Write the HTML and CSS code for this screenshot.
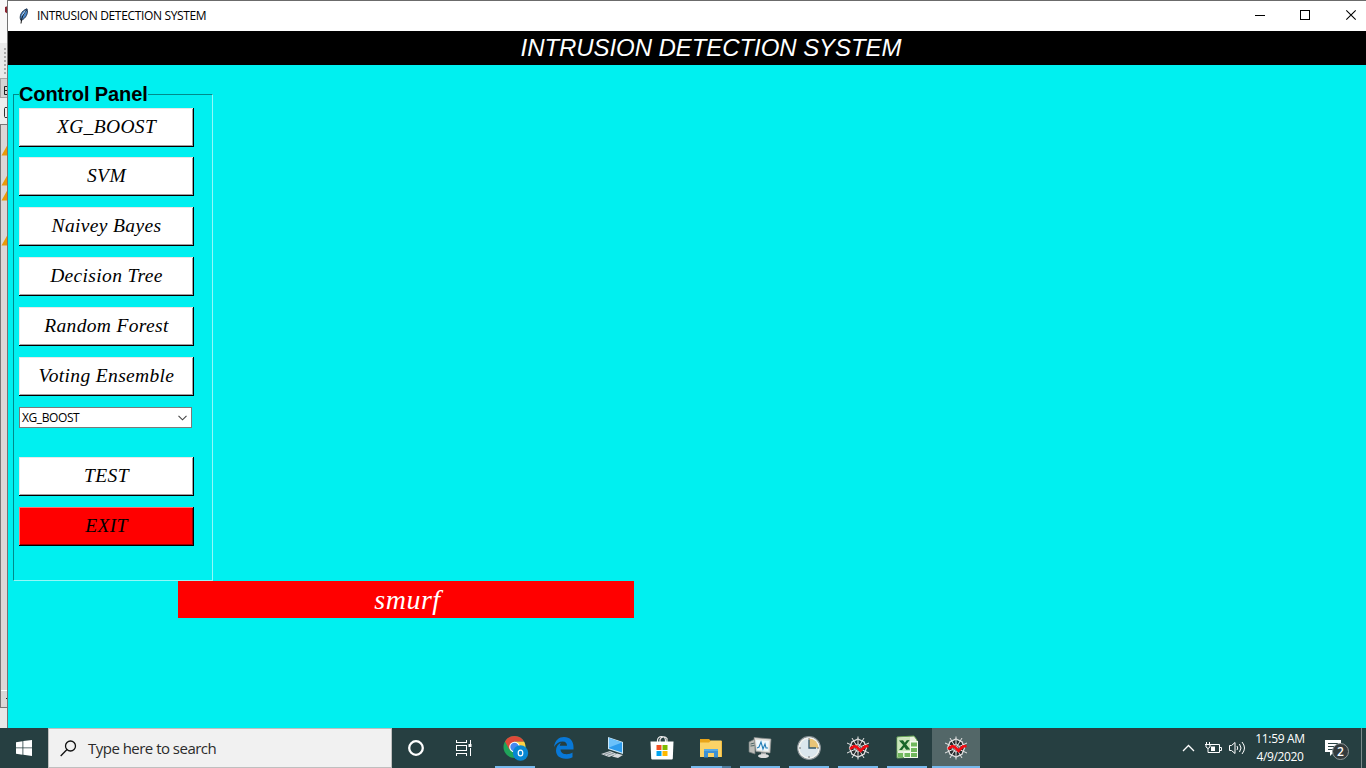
FILE: index.html
```html
<!DOCTYPE html>
<html lang="en">
<head>
<meta charset="utf-8">
<title>INTRUSION DETECTION SYSTEM</title>
<link rel="stylesheet" href="styles.css">
</head>
<body>
<div class="desktop">
  <div class="workspace">
    <div class="behind">
      <svg width="8" height="728" viewBox="0 0 8 728">
        <rect width="8" height="43" fill="#f8f8f8"/>
        <path d="M5 7l3-1v8l-3-2z" fill="#8a2430"/>
        <rect y="43" width="8" height="35" fill="#e9e9e9"/>
        <path d="M5 48v26" stroke="#aaa" stroke-width="2" stroke-dasharray="2 2"/>
        <rect y="78" width="8" height="20" fill="#d4d4d4"/>
        <path d="M0 78.500h8M0 97.500h8M.5 78v20" stroke="#a5a5a5"/>
        <path d="M8 86.500H4.500v8H8M4.500 90.500H8" fill="none" stroke="#222"/>
        <rect y="98" width="8" height="26" fill="#eee"/>
        <path d="M8 107.500H5l-.5 1v8l.5 1h3" fill="none" stroke="#333"/>
        <rect y="124" width="8" height="584" fill="#dbd7d7"/>
        <path d="M0 124.500h8M.5 124v584M0 707.500h8" stroke="#777"/>
        <path d="M1 690.500h7" stroke="#fff"/>
        <path d="M6 698.500h2" stroke="#222"/>
        <path d="M1.500 155.500L8 144v11.500zM1.500 185.500L8 174v11.500zM1.500 200.500L8 189v11.500zM1.500 245.500L8 234v11.500z" fill="#e99a08"/>
        <rect y="708" width="8" height="20" fill="#e8e8e8"/>
        <path d="M7.500 0v728" stroke="#737373"/>
      </svg>
    </div>
    <main class="window">
      <header class="titlebar">
        <svg class="feather" width="10" height="16" viewBox="0 0 10 16"><path d="M2 12.500C-.3 8.500 2.500 2.500 8 .8 9.500 5 7 10.500 2 12.500z" fill="#4a86c8" stroke="#14263d" stroke-width=".9"/><path d="M2 15.500C2.400 10 4 6 7.500 2" fill="none" stroke="#111" stroke-width="1"/><path d="M3 7.500L6.300 2.800" stroke="#b8d8f5"/></svg>
        <span class="window-name">INTRUSION DETECTION SYSTEM</span>
        <svg class="window-controls" width="112" height="30" viewBox="0 0 112 30" fill="none" stroke="#000"><path d="M1 14.500h10M46.500 9.500h9v9h-9z" shape-rendering="crispEdges"/><path d="M92.300 9.300l9.400 9.400M101.700 9.300l-9.400 9.400" stroke-width="1.100"/></svg>
      </header>
      <h1 class="banner"><span>INTRUSION DETECTION SYSTEM</span></h1>
      <div class="content">
        <fieldset class="panel">
          <legend>Control Panel</legend>
          <button class="btn first">XG_BOOST</button>
          <button class="btn">SVM</button>
          <button class="btn">Naivey Bayes</button>
          <button class="btn">Decision Tree</button>
          <button class="btn">Random Forest</button>
          <button class="btn">Voting Ensemble</button>
          <div class="combo"><span>XG_BOOST</span><svg width="9" height="6" viewBox="0 0 9 6"><path d="M.5 .8l4 4 4-4" fill="none" stroke="#444" stroke-width="1.100"/></svg></div>
          <button class="btn">TEST</button>
          <button class="btn exit">EXIT</button>
        </fieldset>
        <div class="result">smurf</div>
      </div>
    </main>
  </div>
  <footer class="taskbar">
    <div class="start"><svg width="16" height="16" viewBox="0 0 16 16" fill="#fff"><path d="M0 2.200L6.500 1.200v6.300H0zM7.300 1.100L16 0v7.500H7.300zM0 8.300h6.500v6.400L0 13.800zM7.300 8.300H16V16l-8.700-1.200z"/></svg></div>
    <div class="search"><svg width="17" height="17" viewBox="0 0 17 17" fill="none" stroke="#111" stroke-width="1.300"><circle cx="10.500" cy="6" r="5"/><path d="M7 9.500L.7 16"/></svg><span>Type here to search</span></div>
    <nav class="apps">
      <div class="app cortana"><svg width="24" height="24" viewBox="0 0 24 24"><circle cx="12" cy="12" r="6.800" fill="none" stroke="#fff" stroke-width="2.300"/></svg></div>
      <div class="app view"><svg width="24" height="24" viewBox="0 0 24 24" fill="none" stroke="#fff"><path d="M4 4v2.500h10V4M4 20v-2.500h10V20M4 9.500h10v5H4zM18 4v4M18 12v8" shape-rendering="crispEdges"/><path d="M16.500 8h3v3h-3z" fill="#fff" stroke="none"/></svg></div>
      <div class="app open"><svg width="28" height="28" viewBox="0 0 28 28"><circle cx="13.500" cy="13" r="11" fill="#20a45a"/><path d="M4 7.500A11 11 0 0 1 23.200 7.800H13.500l-5 8z" fill="#df4939"/><path d="M13.500 7.800h9.700A11 11 0 0 1 14 24l5-8z" fill="#fdd044"/><circle cx="13.500" cy="13" r="5.300" fill="#fff"/><circle cx="13.500" cy="13" r="4.200" fill="#4688ef"/><circle cx="19.500" cy="19" r="7.700" fill="#0787d2"/><ellipse cx="19.500" cy="19" rx="2.300" ry="2.900" fill="none" stroke="#fff" stroke-width="1.200"/></svg></div>
      <div class="app"><svg width="24" height="24" viewBox="0 0 24 24"><path d="M2 11C3 4 7 1 12 1c6 0 9.500 4 9.500 10v2.500H8.500c.2 3 2.500 4.700 6 4.700 2.500 0 4.500-.7 6-1.700v4.700c-2 1.200-4.400 1.600-7 1.600-6 0-9.500-3.400-9.500-8.200 0-3.800 2-6.400 5-7.800-.6.800-1 1.700-1.200 3H15c0-2.700-1.300-4.300-4.200-4.300-3.800 0-6.800 2-8.800 5.500z" fill="#0878d7"/></svg></div>
      <div class="app"><svg width="26" height="24" viewBox="0 0 26 24"><path d="M8 1l15 5v12L8 13z" fill="#cce9fa"/><path d="M9 2.300l13 4.300v9.900L9 12.200z" fill="#2d9ced"/><path d="M9 2.300l13 4.300-13 5z" fill="#6ac1fa"/><path d="M1 18l9-3 7 3-8 3z" fill="#ced4d7"/><path d="M4 18.500l7-2.500M7 19.500l7-2.500" stroke="#89949a"/><path d="M12 20.500l5-3 6 1.500-5 3z" fill="#d6dadc"/></svg></div>
      <div class="app"><svg width="24" height="26" viewBox="0 0 24 26"><path d="M7.500 7V5.500a4 4 0 0 1 8 0V7M10 7V4.500a4 4 0 0 1 7-1V7" fill="none" stroke="#eee" stroke-width="1.200"/><path d="M.5 6.500h23l-.7 17a1.200 1.200 0 0 1-1 1H2.200a1.200 1.200 0 0 1-1-1z" fill="#fff"/><path d="M6.500 10h5v5h-5z" fill="#f25022"/><path d="M12.500 10h5v5h-5z" fill="#7fba00"/><path d="M6.500 16h5v5h-5z" fill="#00a4ef"/><path d="M12.500 16h5v5h-5z" fill="#ffb900"/></svg></div>
      <div class="app open multi"><svg width="24" height="24" viewBox="0 0 24 24"><path d="M1 3h9l2 2h11v16H1z" fill="#e9a51a"/><path d="M1 6.500h9l2-2h10.500v16.500H1z" fill="#fbd367"/><path d="M5 13h14v8.500h-4V17H9v4.500H5z" fill="#3d91d3"/><path d="M5 13h14v2H5z" fill="#58abe5"/></svg></div>
      <div class="app open"><svg width="26" height="24" viewBox="0 0 26 24"><path d="M2 6l6-3v15l-6-2z" fill="#bcbdb9" stroke="#71787a" stroke-width=".7"/><path d="M3.500 8l4-1M3.500 10l4-.5" stroke="#4c6666"/><path d="M7 1.500l17 1.500-1 14-14-1.500z" fill="#e0dfda" stroke="#858a8a" stroke-width=".7"/><path d="M9 4l13 1-.8 10-11.200-1z" fill="#eef8fd"/><path d="M10 12l2-1 2-5 2 7 2-5 1 4h2" fill="none" stroke="#237eb7" stroke-width="1.100"/><path d="M14 16.500h5v3.500h-5z" fill="#aaa"/><ellipse cx="16.500" cy="20" rx="5.500" ry="2" fill="#ddd"/></svg></div>
      <div class="app open"><svg width="26" height="26" viewBox="0 0 26 26"><circle cx="13" cy="13" r="11.300" fill="#dbe7ed" stroke="#8c9498" stroke-width="1.200"/><circle cx="13" cy="13" r="10" fill="none" stroke="#f5f5ef" stroke-width="1.200"/><path d="M13 13V3.500a9.500 9.500 0 0 1 9.500 9.500z" fill="#e8c477"/><path d="M13 5v8h7" fill="none" stroke="#31586f" stroke-width="1.300"/><path d="M13 3v2M13 21v2M3 13h2M21 13h2" stroke="#777"/></svg></div>
      <div class="app open"><svg width="24" height="24" viewBox="0 0 24 24"><use href="#web"/></svg></div>
      <div class="app open"><svg width="26" height="26" viewBox="0 0 26 26"><path d="M3 2l17-1 3 4v17l-20 1z" fill="#e7f1df" stroke="#65a554"/><path d="M10 6h14v17H10z" fill="#f4faee"/><path d="M17 7.500h6v4h-6zM17 13h6v4h-6zM4 18h5v4H4zM10.500 18h5.500v4h-5.500zM17 18h6v4h-6z" fill="#70b85d"/><path d="M3.500 3l12.500-1v14L3.500 16z" fill="#c9e5ba"/><path d="M5 5.500l4-.2 1.800 2.500 1.900-2.600 3-.1-3.500 4.500 4 4.900-4 .2-2-2.600-2.100 2.800-3 .1 4-5z" fill="#17652a"/></svg></div>
      <div class="app open active"><svg width="24" height="24" viewBox="0 0 24 24"><defs><g id="web"><path d="M12 3l6 2.800L20.500 12 18 18.200 12 21l-6-2.800L3.500 12 6 5.800z" fill="#252b2d" stroke="#ddd" stroke-width="1.300"/><path d="M12 .5v23M1 7l22 10M23 7L1 17M6 2l12 20M18 2L6 22" stroke="#e4e4e4"/><path d="M12 8l2.800 1.200L16 12l-1.200 2.800L12 16l-2.800-1.200L8 12l1.200-2.800z" fill="none" stroke="#ccc"/><path d="M4 13l4-2.700 2.500.5 4 4 4.500-4.300 3.500-.5" fill="none" stroke="#f20b12" stroke-width="2.700"/></g></defs><use href="#web"/></svg></div>
    </nav>
    <div class="tray">
      <svg width="66" height="20" viewBox="0 0 66 20" fill="none" stroke="#fff"><path d="M1 13l5.500-5.500L12 13" stroke-width="1.300"/><path d="M28.500 6.500h9v8H26M38 9.500h1.500v3H38"/><path d="M29 8.500h4v4.500h-4z" fill="#fff" stroke="none"/><path d="M24.500 4v2M27.500 4v2M23 6.500h6M24 7v2l2 1.500 2-1.500V7M26 10v4.500"/><path d="M47.500 7.500h2l3.500-3v11l-3.500-3h-2z"/><path d="M55 8q1.500 2 0 4M57.500 6q3 4 0 8M60 4q5 6 0 12"/></svg>
      <div class="clock"><span class="time">11:59 AM</span><span class="date">4/9/2020</span></div>
      <div class="notice"><svg width="18" height="17" viewBox="0 0 18 17"><path d="M0 0h16v12H9l-4 4v-4H0z" fill="#fff"/><path d="M3 3.500h10M3 6.500h10M3 9.500h5" stroke="#294344"/></svg><span class="badge">2</span></div>
      <i class="peek"></i>
    </div>
  </footer>
</div>
</body>
</html>
```
FILE: styles.css
```css
* { box-sizing: border-box; }
body { margin: 0; width: 1366px; height: 768px; overflow: hidden; font-family: "Open Sans", "Noto Sans", sans-serif; }
svg { display: block; flex: none; }
.desktop { display: grid; grid-template-rows: 728px 40px; }
.workspace { display: grid; grid-template-columns: 8px 1fr; }
.window { background: #00f0f0; border-top: 1px solid #6b6b6b; }
.titlebar { height: 30px; background: #fff; display: flex; align-items: center; padding-left: 11px; }
.feather { margin-right: 8px; margin-top: -1px; }
.window-name { font-size: 12px; letter-spacing: -0.34px; margin-top: -1px; color: #000; white-space: nowrap; }
.window-controls { margin-left: auto; }
.banner { margin: 0; height: 34px; background: #000; color: #fff; font: italic 24px/34px "Liberation Sans", Arial, sans-serif; letter-spacing: -0.07px; text-align: center; padding-left: 48px; white-space: nowrap; }
.content { padding: 19px 0 0 5px; }
.panel { width: 200px; height: 497px; margin: 0; padding: 0 0 0 5px; border: 1px solid; border-color: #008b8b #91f8f8 #91f8f8 #008b8b; }
.panel legend { padding: 0; font: bold 20px/20px "Liberation Sans", Arial, sans-serif; letter-spacing: -0.1px; color: #000; height: 20px; }
.btn { display: block; width: 175px; height: 39px; margin: 0 0 11px; padding: 0 0 2px; background: #fff; color: #000; border: 0; box-shadow: inset -1px -1px #000, inset 1px 1px #e8e8e8, inset -2px -2px #a0a0a0; font: italic 19.5px/37px "Liberation Serif", "Times New Roman", serif; letter-spacing: 0.35px; text-align: center; }
.btn.first { margin-top: 4px; margin-bottom: 10px; }
.exit { background: #f00; box-shadow: inset -1px -1px #000, inset 1px 1px #ff7070, inset -2px -2px #900; }
.combo { width: 173px; height: 21px; border: 1px solid #7a7a7a; background: #fff; display: flex; align-items: center; justify-content: space-between; padding: 0 4px 0 2px; margin-bottom: 29px; font-size: 12px; letter-spacing: -0.4px; }
.result { width: 456px; height: 37px; margin-left: 165px; padding-left: 3px; background: #f00; color: #fff; font: italic 28px/37px "Liberation Serif", "Times New Roman", serif; letter-spacing: 0.5px; text-align: center; }
.taskbar { background: #263f41; display: flex; color: #fff; }
.start { width: 48px; display: flex; align-items: center; justify-content: center; }
.search { width: 344px; background: #f1f1f1; border: 1px solid #bfbfbf; display: flex; align-items: center; padding-left: 11px; gap: 11px; color: #2b2b2b; font-size: 15px; letter-spacing: -0.52px; }
.apps { display: flex; }
.app { width: 49px; height: 40px; display: flex; align-items: center; justify-content: center; }
.cortana { padding-right: 2px; }
.view { padding-right: 4px; }
.open { background: linear-gradient(#76b9ed, #76b9ed) 5px 38px / 40px 2px no-repeat; }
.multi { background: linear-gradient(90deg, #76b9ed 31px, #4d7c9d 31px) 5px 38px / 40px 2px no-repeat; }
.active { background: linear-gradient(#76b9ed, #76b9ed) 0 38px / 48px 2px no-repeat, #536768; width: 48px; margin-left: 1px; }
.tray { margin-left: auto; display: flex; align-items: center; }
.clock { width: 62px; margin-left: 1px; display: flex; flex-direction: column; text-align: center; font-size: 12px; line-height: 18px; letter-spacing: -0.35px; white-space: nowrap; }
.notice { width: 26px; height: 24px; margin-left: 14px; margin-right: 10px; padding-top: 4px; position: relative; }
.badge { position: absolute; left: 7px; top: 7px; width: 17px; height: 17px; border: 1px solid #91999a; border-radius: 50%; background: #343b3d; font-size: 12px; font-weight: 600; line-height: 15px; text-align: center; }
.peek { width: 5px; height: 40px; border-left: 1px solid #7c8b8c; }
```
